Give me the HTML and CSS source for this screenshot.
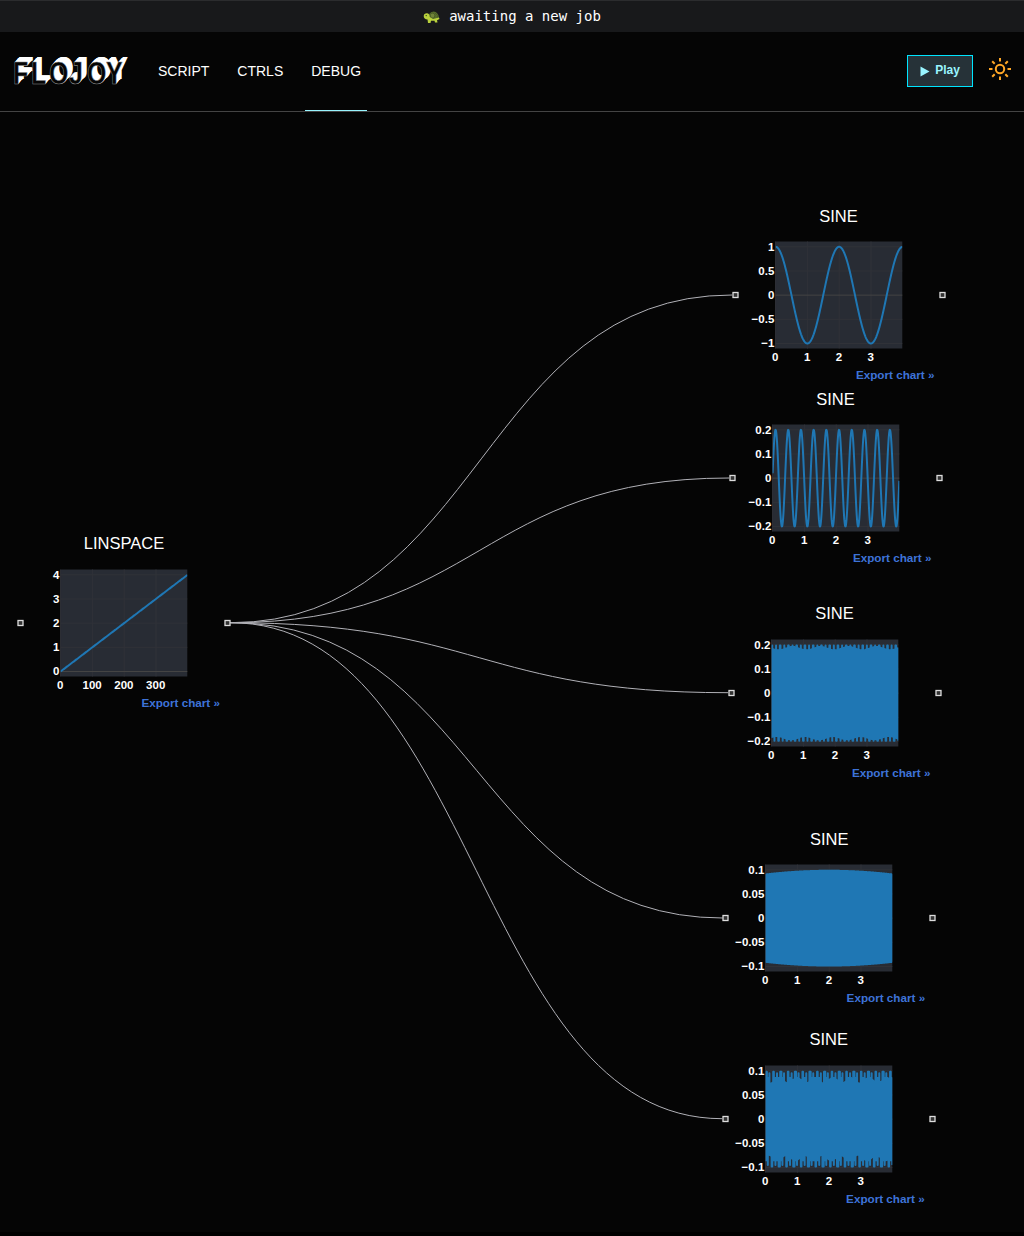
FILE: index.html
```
<!DOCTYPE html>
<html lang="en">
<head>
<meta charset="utf-8">
<title>Flojoy</title>
<link rel="stylesheet" href="styles.css">
</head>
<body>
<div class="status">
  <svg class="turtle" width="17" height="14" viewBox="0 0 17 14" aria-hidden="true">
    <path d="M5 9Q5 2 10.500 1.500Q15.500 2 16 8L14 10Z" fill="#566b2b"/>
    <path d="M7 4L10 3L12 5L11 8L8 8Z M12 3L14 5L15 8" fill="#71843a" stroke="#3d5020" stroke-width=".6"/>
    <path d="M.7 6Q1 3.200 4 3.300Q6.500 3.500 6.700 7L10 9L16 7.500L16.500 9L14 10.300L14.500 12.500H12L11.500 10.800H8L7.500 13H5L4.500 9.500Q.8 9.300 .7 6Z" fill="#b9d13d"/>
    <circle cx="3.200" cy="5.600" r=".7" fill="#28351a"/>
  </svg>
  <span>awaiting a new job</span>
</div>
<header class="header">
  <div class="logo"><span>F</span><span>L</span><span>O</span><span>J</span><span>O</span><span>Y</span></div>
  <nav class="tabs">
    <a class="tab">SCRIPT</a>
    <a class="tab">CTRLS</a>
    <a class="tab tab-active">DEBUG</a>
  </nav>
  <div class="actions">
    <button class="play">
      <svg width="10" height="11" viewBox="0 0 10 11"><path d="M.5 .5L9.500 5.500L.5 10.500Z" fill="#99f5ff"/></svg>
      <span>Play</span>
    </button>
    <svg class="sun" width="22" height="22" viewBox="0 0 22 22" fill="none" stroke="#ffa726" stroke-width="2">
      <circle cx="11" cy="11" r="4.200"/>
      <path d="M11 0V3.500M11 18.500V22M0 11H3.500M18.500 11H22M3.200 3.200L5.700 5.700M16.300 16.300L18.800 18.800M18.800 3.200L16.300 5.700M5.700 16.300L3.200 18.800"/>
    </svg>
  </div>
</header>
<main class="canvas" id="canvas">
  <svg class="edges" width="1024" height="1120" id="edges"></svg>
</main>
<script src="app.js"></script>
</body>
</html>
```
FILE: styles.css
```
* { box-sizing: border-box; }
body {
  margin: 0;
  width: 1024px;
  height: 1236px;
  overflow: hidden;
  display: flex;
  flex-direction: column;
  background: #050505;
  color: #fff;
  font-family: "Liberation Sans", Arial, sans-serif;
}
.status {
  height: 32px;
  flex: none;
  display: flex;
  align-items: center;
  justify-content: center;
  gap: 9px;
  padding-bottom: 1px;
  background: #18191b;
  border-top: 1px solid #2b2c2e;
  font: 14px "DejaVu Sans Mono", monospace;
}
.turtle { display: block; margin-top: 1px; }
.header {
  height: 80px;
  flex: none;
  display: flex;
  border-bottom: 1px solid #444;
}
.logo {
  width: 139px;
  margin: 24px 0 0 13px;
  display: flex;
  flex: none;
  color: #050505;
  font-size: 31px;
  font-weight: bold;
  line-height: 36px;
  -webkit-text-stroke: .5px #888;
  text-shadow:
    .5px -.5px #fff, 1px -1px #fff, 1.500px -1.500px #fff,
    2px -2px #fff, 2.500px -2.500px #fff, 3px -3px #fff,
    3.500px -3.500px #fff, 4px -3.800px #fff, 4.500px -4.200px #fff,
    5px -4.500px #fff, 5.500px -4.700px #fff, 6px -4.800px #fff,
    7px -4.800px #fff;
}
.logo span {
  flex: none;
  width: 18px;
  transform: scaleX(.8);
  transform-origin: 0 0;
}
.logo span:nth-child(3) { width: 20px; }
.logo span:nth-child(5) { width: 19px; }
.tabs { display: flex; gap: 16px; }
.tab {
  height: 79px;
  padding: 31px 6px 0;
  font-size: 14px;
  line-height: 16px;
}
.tab-active { border-bottom: 1px solid #99f5ff; }
.actions {
  display: flex;
  gap: 16px;
  margin: 23px 13px 0 auto;
}
.play {
  width: 66px;
  height: 32px;
  padding: 0 0 2px;
  display: flex;
  align-items: center;
  justify-content: center;
  gap: 5px;
  border: 1px solid #00e5ff;
  background: #263238;
  color: #99f5ff;
  font: bold 12px "Liberation Sans", Arial, sans-serif;
}
.play svg { margin-top: 3px; }
.sun { margin-top: 3px; }
.canvas {
  position: relative;
  flex: 1;
  border-bottom: 4px solid #000;
}
.edges { position: absolute; left: 0; top: 0; }
.edges path { fill: none; stroke: #b1b1b7; stroke-width: 1; }
.node {
  position: absolute;
  width: 208px;
  display: flex;
  flex-direction: column;
}
.node-title {
  height: 20px;
  text-align: center;
  font-size: 16.500px;
  line-height: 20px;
}
.chart { display: block; overflow: visible; }
.chart-low { margin-top: 1px; }
.chart text {
  fill: #fff;
  font: bold 11.500px "Liberation Sans", Arial, sans-serif;
}
.plot { fill: #282c34; }
.grid { stroke: #303238; stroke-width: 1; }
.zero { stroke: #444; stroke-width: 1; }
.trace {
  fill: none;
  stroke: #1f77b4;
  stroke-width: 2;
  stroke-linejoin: round;
}
.handle { fill: #333; stroke: #ddd; stroke-width: 1.300; }
.export {
  align-self: flex-end;
  margin-right: 8px;
  color: #3e73d8;
  font-size: 11.700px;
  font-weight: bold;
  line-height: 14px;
}
```
FILE: app.js
```
const PW = 126.7, PH = 107, N = 400;
const samples = fn => Array.from({ length: N }, (_, i) => fn(i * 4 / N, i));
const wave = (amp, freq, phase) => samples(x => amp * Math.sin(2 * Math.PI * freq * x + phase));
// Undersampled sine: the sign flips on every sample and the envelope dips in a beat pattern.
const beat = (amp, dip) => samples((x, i) => (i % 2 ? -1 : 1) * amp * (1 - dip(i + (i % 2 ? 5 : 0))));

const nodes = [
  { title: 'LINSPACE', x: 20.5, y: 622, low: true, ticks: ['0', '1', '2', '3', '4'], xt: ['0', '100', '200', '300'], lo: 0, hi: 4, data: samples(x => x) },
  { title: 'SINE', x: 735, y: 295, ticks: ['−1', '−0.5', '0', '0.5', '1'], lo: -1, hi: 1, data: wave(1, .5, Math.PI / 2) },
  { title: 'SINE', x: 732, y: 478, ticks: ['−0.2', '−0.1', '0', '0.1', '0.2'], lo: -.2, hi: .2, data: wave(.2, 2.5, .1) },
  { title: 'SINE', x: 731, y: 692, low: true, ticks: ['−0.2', '−0.1', '0', '0.1', '0.2'], lo: -.2, hi: .2,
    data: beat(.197, i => i % 13 < 3 ? 0 : .065 + .035 * Math.sin(i / 14)) },
  { title: 'SINE', x: 725.7, y: 918, ticks: ['−0.1', '−0.05', '0', '0.05', '0.1'], lo: -.1, hi: .1,
    data: samples((x, i) => (i % 2 ? -1 : 1) * .098 * Math.cos((x - 2) * .2)) },
  { title: 'SINE', x: 725.2, y: 1118, low: true, ticks: ['−0.1', '−0.05', '0', '0.05', '0.1'], lo: -.1, hi: .1,
    data: beat(.098, i => { const p = i % 23; return p < 5 ? 0 : p < 12 ? .13 : p < 14 ? .03 : .19 + .06 * Math.sin(i / 9); }) }
];

const canvas = document.getElementById('canvas');
nodes.forEach((n, k) => {
  const L = 40.6, T = 15.5;
  const py = v => T + PH - 5 - (v - n.lo) / (n.hi - n.lo) * 96.7;
  let s = `<rect class="plot" x="${L}" y="${T}" width="${PW}" height="${PH}"/>`;
  (n.xt || ['0', '1', '2', '3']).forEach((t, i) => {
    const x = L + i * 31.8;
    s += `<line class="grid" x1="${x}" x2="${x}" y1="${T}" y2="${T + PH}"/><text x="${x - .3}" y="${T + PH + 12.4}" text-anchor="middle">${t}</text>`;
  });
  n.ticks.forEach((t, i) => {
    const y = py(n.lo + (n.hi - n.lo) * i / 4);
    s += `<line class="${t === '0' ? 'zero' : 'grid'}" x1="${L}" x2="${L + PW}" y1="${y}" y2="${y}"/><text x="${L - 1.3}" y="${y + 3.8}" text-anchor="end">${t}</text>`;
  });
  const pts = n.data.map((v, i) => (L + i / (N - 1) * PW).toFixed(2) + ',' + py(v).toFixed(2)).join(' ');
  s += `<clipPath id="clip${k}"><rect x="${L}" y="${T}" width="${PW}" height="${PH}"/></clipPath>`;
  s += `<polyline class="trace" clip-path="url(#clip${k})" points="${pts}"/>`;
  const hy = T + PH / 2;
  s += [.5, 207.5].map(x => `<rect class="handle" x="${x - 2.5}" y="${hy - 2.5}" width="5" height="5"/>`).join('');
  const el = document.createElement('section');
  el.className = 'node';
  el.style.left = n.x - .5 + 'px';
  el.style.top = n.y - 112 - 89 + 'px';
  el.innerHTML = `<div class="node-title">${n.title}</div><svg class="chart${n.low ? ' chart-low' : ''}" width="208" height="142">${s}</svg><a class="export">Export chart »</a>`;
  canvas.appendChild(el);
});

const src = nodes[0];
const portY = n => n.y + (n.low ? .7 : 0) - 112;
const sx = src.x + 210, sy = portY(src);
document.getElementById('edges').innerHTML = nodes.slice(1).map(n => {
  const tx = n.x - 3, ty = portY(n), mx = (sx + tx) / 2;
  return `<path d="M${sx} ${sy}C${mx} ${sy} ${mx} ${ty} ${tx} ${ty}"/>`;
}).join('');
```
